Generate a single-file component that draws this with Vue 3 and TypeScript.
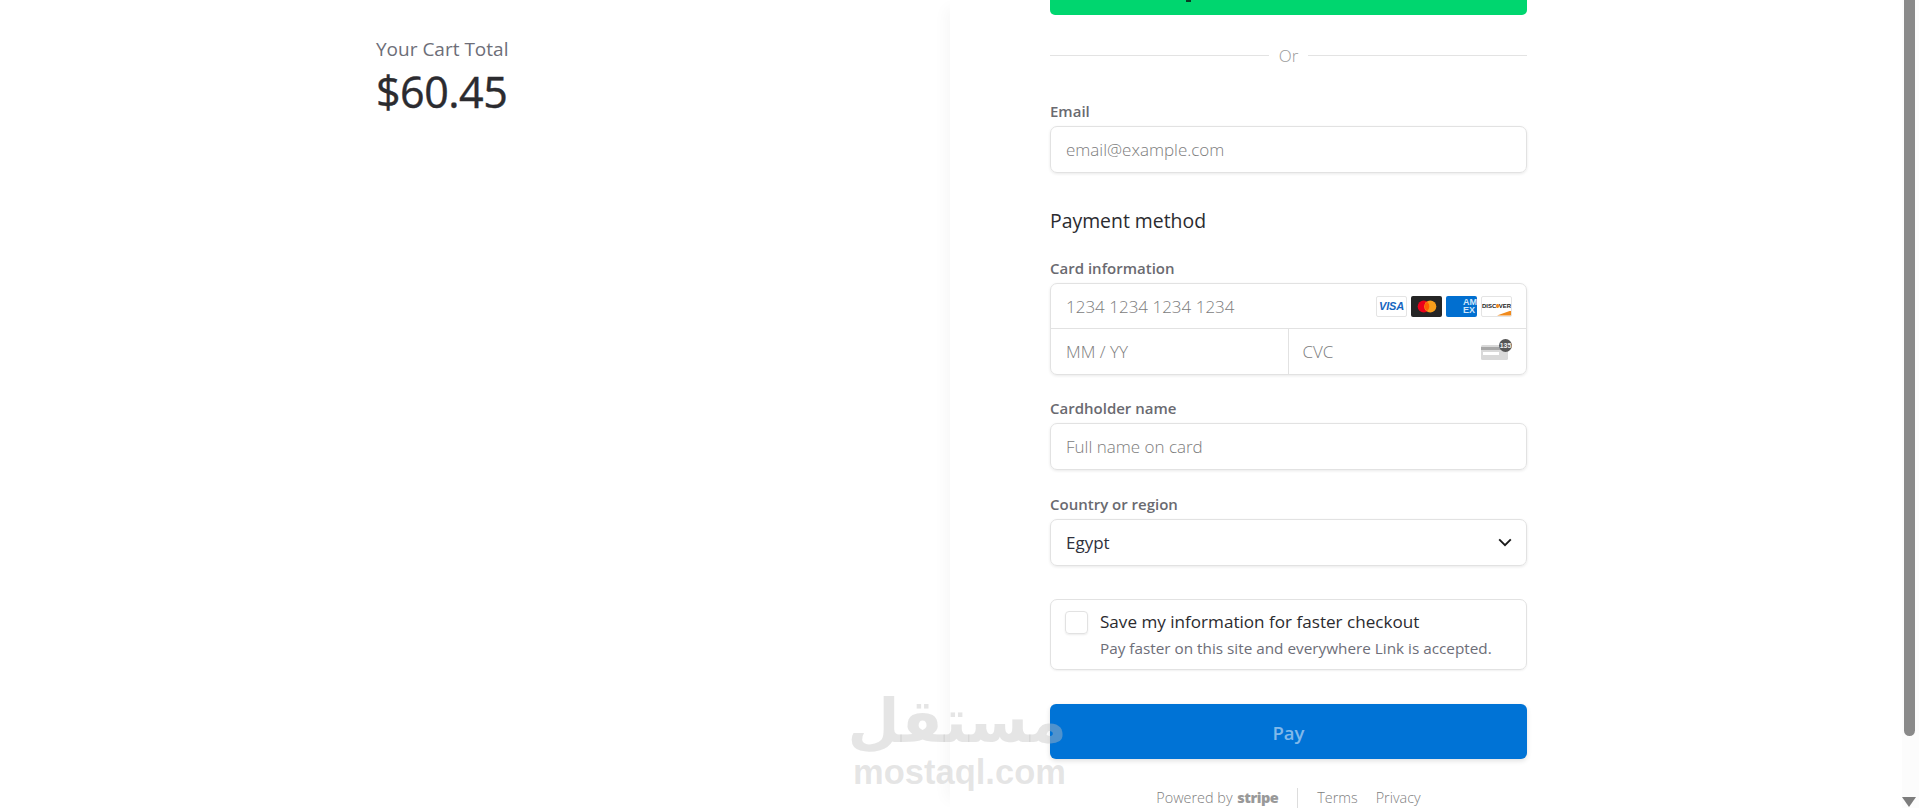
<script setup lang="ts">
const brands = ['visa', 'mc', 'amex', 'discover']
</script>

<template>
  <div class="page">
    <section class="summary">
      <div class="summary-inner">
        <p class="total-label">Your Cart Total</p>
        <p class="total">$60.45</p>
      </div>
    </section>

    <section class="checkout">
      <div class="form">
        <button class="express" type="button"><span class="express-tail"></span></button>

        <div class="or"><span>Or</span></div>

        <label class="label email-label">Email</label>
        <div class="input">email@example.com</div>

        <h2 class="method">Payment method</h2>

        <label class="label">Card information</label>
        <div class="card-box">
          <div class="card-row">
            <span>1234 1234 1234 1234</span>
            <span class="brands">
              <span v-for="b in brands" :key="b" class="brand" :class="b">
                <template v-if="b === 'visa'">VISA</template>
                <svg v-else-if="b === 'mc'" width="20" height="13" viewBox="0 0 18 12">
                  <circle cx="6" cy="6" r="5.6" fill="#eb001b" />
                  <circle cx="12" cy="6" r="5.6" fill="#f79e1b" />
                  <path d="M9 1.6a5.6 5.6 0 0 1 0 8.8a5.6 5.6 0 0 1 0-8.8z" fill="#ff5f00" />
                </svg>
                <template v-else-if="b === 'amex'"><i>AM<br />EX</i></template>
                <template v-else>DISC<b></b>VER</template>
              </span>
            </span>
          </div>
          <div class="card-split">
            <div class="cell">MM / YY</div>
            <div class="cell cvc">
              <span>CVC</span>
              <span class="cvc-icon">
                <svg width="30" height="20" viewBox="0 0 30 20">
                  <rect x="1" y="5" width="27" height="15" rx="1.5" fill="#d9d9d9" />
                  <rect x="1" y="7" width="27" height="3" fill="#a8a8a8" />
                  <rect x="3" y="12" width="16" height="3" fill="#fff" />
                </svg>
                <em>135</em>
              </span>
            </div>
          </div>
        </div>

        <label class="label gap">Cardholder name</label>
        <div class="input">Full name on card</div>

        <label class="label gap country">Country or region</label>
        <div class="input select">
          <span>Egypt</span>
          <svg width="14" height="9" viewBox="0 0 14 9">
            <path d="M1.2 1.4 7 7.2l5.8-5.8" fill="none" stroke="#1a1a1a" stroke-width="1.9" />
          </svg>
        </div>

        <div class="save">
          <span class="check"></span>
          <div>
            <div class="save-title">Save my information for faster checkout</div>
            <div class="save-sub">Pay faster on this site and everywhere Link is accepted.</div>
          </div>
        </div>

        <button class="pay" type="button">Pay</button>

        <footer class="foot">
          <span class="powered">Powered by <b>stripe</b></span>
          <span class="sep"></span>
          <span>Terms</span>
          <span>Privacy</span>
        </footer>
      </div>
    </section>

    <div class="scrollbar">
      <div class="thumb"></div>
      <div class="arrow"></div>
    </div>

    <div class="watermark">
      <div class="wm-ar" lang="ar" dir="rtl">مستقل</div>
      <div class="wm-en">mostaql.com</div>
    </div>
  </div>
</template>

<style>
html,
body {
  margin: 0;
  height: 100%;
  overflow: hidden;
  background: #fff;
}
</style>

<style scoped>
.page {
  position: relative;
  display: flex;
  width: 1919px;
  height: 808px;
  overflow: hidden;
  font-family: "Open Sans", "Noto Sans", sans-serif;
  color: #1a1a1a;
  background: #fff;
}
.summary {
  width: 950px;
  flex: none;
  padding: 36px 0 0 376px;
  box-sizing: border-box;
}
.total-label {
  margin: 0;
  font-size: 19px;
  line-height: 26px;
  font-weight: 400;
  color: #6d6e78;
}
.total {
  margin: 2px 0 0;
  font-size: 43px;
  line-height: 56px;
  font-weight: 500;
  color: #2b2b2f;
  letter-spacing: -0.5px;
  -webkit-text-stroke: 0.4px #2b2b2f;
}
.checkout {
  flex: 1;
  box-shadow: -12px 0 14px -8px rgba(0, 0, 0, 0.035);
  padding-left: 100px;
}
.form {
  width: 477px;
}
.express {
  display: block;
  position: relative;
  width: 100%;
  height: 15px;
  padding: 0;
  border: 0;
  background: #00d66f;
  border-radius: 0 0 5px 5px;
}
.express-tail {
  position: absolute;
  left: 136px;
  top: 0;
  width: 5px;
  height: 2px;
  background: #0a3a24;
}
.or {
  display: flex;
  align-items: center;
  gap: 9px;
  margin-top: 29px;
  height: 22px;
  font-size: 17px;
  color: #9a9a9a;
}
.or::before,
.or::after {
  content: "";
  flex: 1;
  height: 1px;
  background: #e3e3e3;
}
.or span {
  padding: 0 1px;
  font-weight: 300;
}
.label {
  display: block;
  height: 20px;
  margin-bottom: 5px;
  font-size: 15px;
  line-height: 20px;
  font-weight: 600;
  color: #6a6a70;
}
.email-label {
  margin-top: 35px;
}
.gap {
  margin-top: 23px;
}
.country {
  margin-top: 24px;
}
.input {
  display: flex;
  align-items: center;
  justify-content: space-between;
  box-sizing: border-box;
  height: 47px;
  padding: 0 14px 0 15px;
  border: 1px solid #e2e2e2;
  border-radius: 7px;
  box-shadow: 0 1px 3px rgba(0, 0, 0, 0.09);
  font-size: 17px;
  font-weight: 300;
  color: #7c7c7c;
}
.select {
  color: #30313d;
  font-weight: 400;
}
.method {
  margin: 35px 0 24px;
  height: 26px;
  font-size: 19.4px;
  line-height: 26px;
  font-weight: 500;
  color: #2b2b2f;
}
.card-box {
  box-sizing: border-box;
  height: 92px;
  border: 1px solid #e2e2e2;
  border-radius: 7px;
  box-shadow: 0 1px 3px rgba(0, 0, 0, 0.09);
  font-size: 17px;
  font-weight: 300;
  color: #7c7c7c;
}
.card-row {
  display: flex;
  align-items: center;
  justify-content: space-between;
  box-sizing: border-box;
  height: 45px;
  padding: 0 14px 0 15px;
  border-bottom: 1px solid #e2e2e2;
}
.brands {
  display: flex;
  gap: 4px;
}
.brand {
  display: flex;
  align-items: center;
  justify-content: center;
  box-sizing: border-box;
  width: 31px;
  height: 21px;
  border-radius: 2px;
  overflow: hidden;
  position: relative;
  font-family: "Liberation Sans", sans-serif;
}
.visa {
  border: 1px solid #e4e4e4;
  color: #1565c0;
  font-size: 11px;
  font-weight: 700;
  font-style: italic;
  letter-spacing: -0.2px;
}
.mc {
  background: #252525;
}
.amex {
  background: #016fd0;
  color: #cfe5fa;
  font-size: 9px;
  font-weight: 700;
  justify-content: flex-end;
  line-height: 8px;
}
.amex i {
  font-style: normal;
}
.discover {
  border: 1px solid #e4e4e4;
  color: #222;
  font-size: 6px;
  font-weight: 700;
}
.discover b {
  display: inline-block;
  width: 4px;
  height: 4px;
  border-radius: 50%;
  background: #f08a1d;
}
.discover::after {
  content: "";
  position: absolute;
  right: 0;
  bottom: 0;
  width: 14px;
  height: 5px;
  background: #f08a1d;
  clip-path: polygon(100% 0, 100% 100%, 0 100%);
}
.card-split {
  display: flex;
  height: 45px;
}
.cell {
  flex: 1;
  display: flex;
  align-items: center;
  justify-content: space-between;
  box-sizing: border-box;
  padding: 0 15px;
}
.cvc {
  border-left: 1px solid #e2e2e2;
  margin-left: -1px;
  padding-left: 14px;
  padding-right: 16px;
}
.cvc-icon {
  position: relative;
  display: block;
  width: 30px;
  height: 20px;
  margin-bottom: 4px;
}
.cvc-icon svg {
  display: block;
}
.cvc-icon em {
  position: absolute;
  right: -2px;
  top: -1px;
  width: 13px;
  height: 13px;
  border-radius: 50%;
  background: #555;
  color: #eee;
  font: 700 7px/13px "Liberation Sans", sans-serif;
  text-align: center;
}
.save {
  display: flex;
  gap: 12px;
  box-sizing: border-box;
  height: 71px;
  margin-top: 33px;
  padding: 11px 14px;
  border: 1px solid #e2e2e2;
  border-radius: 7px;
  box-shadow: 0 1px 2px rgba(0, 0, 0, 0.06);
}
.check {
  flex: none;
  width: 21px;
  height: 21px;
  border: 1px solid #e2e2e2;
  border-radius: 4px;
  box-shadow: 0 1px 2px rgba(0, 0, 0, 0.08);
}
.save-title {
  font-size: 17.1px;
  line-height: 22px;
  font-weight: 500;
  color: #2b2b2f;
}
.save-sub {
  margin-top: 5px;
  font-size: 15.3px;
  line-height: 20px;
  color: #6d6e78;
}
.pay {
  display: block;
  width: 100%;
  height: 55px;
  margin-top: 34px;
  padding: 2px 0 0;
  border: 0;
  border-radius: 6px;
  background: #0073d6;
  box-shadow: 0 2px 5px rgba(0, 0, 0, 0.12);
  font-family: inherit;
  font-size: 18.5px;
  font-weight: 600;
  color: #80b9ea;
}
.foot {
  display: flex;
  align-items: center;
  justify-content: center;
  gap: 19px;
  height: 20px;
  line-height: 20px;
  margin-top: 29px;
  font-size: 14.4px;
  font-weight: 300;
  color: #808080;
}
.powered b {
  font-weight: 800;
  font-size: 14.5px;
  line-height: 1;
  letter-spacing: -0.5px;
  color: #999;
  margin-left: 1px;
}
.sep {
  width: 1px;
  height: 20px;
  background: #ddd;
}
.foot span:last-child {
  margin-left: -1px;
}
.scrollbar {
  position: absolute;
  top: 0;
  right: 0;
  display: flex;
  flex-direction: column;
  align-items: center;
  justify-content: space-between;
  width: 17px;
  height: 808px;
  background: #fcfcfc;
  box-sizing: border-box;
  padding-bottom: 1px;
}
.thumb {
  width: 11px;
  height: 736px;
  margin-left: -3px;
  background: #8a8a8a;
  border-radius: 0 0 6px 6px;
}
.arrow {
  width: 0;
  height: 0;
  margin-left: -3px;
  border-left: 7px solid transparent;
  border-right: 7px solid transparent;
  border-top: 10px solid #7d7d7d;
}
.watermark {
  position: absolute;
  left: 852px;
  top: 688px;
  width: 215px;
  text-align: center;
  color: rgba(193, 193, 193, 0.41);
  font-family: "DejaVu Sans", sans-serif;
  font-weight: 700;
  pointer-events: none;
}
.wm-ar {
  font-size: 60px;
  line-height: 66px;
}
.wm-en {
  font-family: "Liberation Sans", sans-serif;
  font-size: 34.5px;
  line-height: 36px;
}
</style>
